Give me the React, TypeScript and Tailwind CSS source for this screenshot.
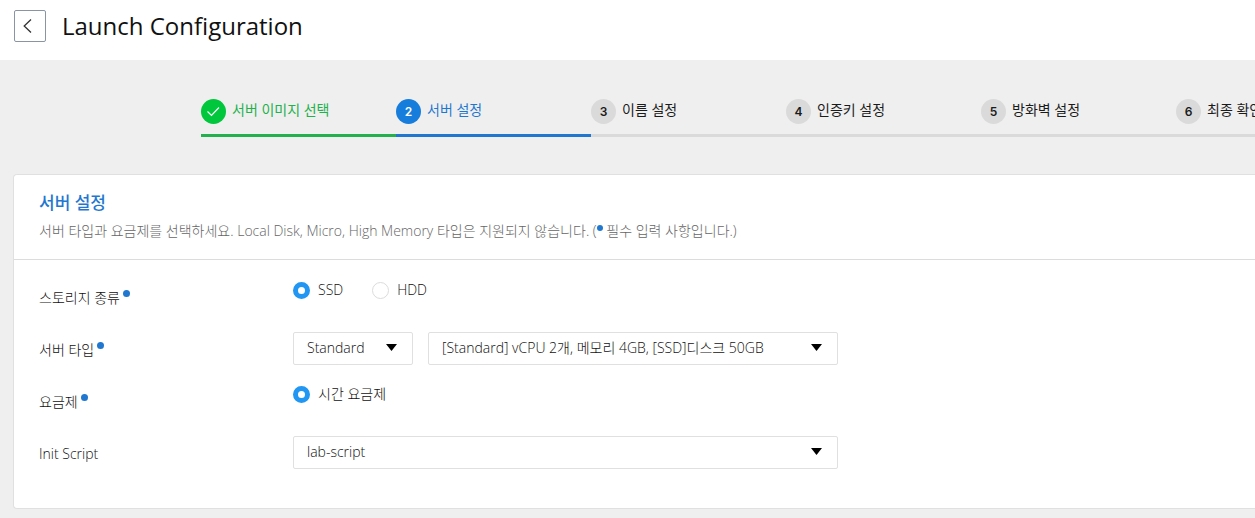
import { useState, type ReactNode, type SelectHTMLAttributes, type InputHTMLAttributes } from "react";

type StepState = "done" | "current" | "upcoming";

const steps: { label: string; state: StepState }[] = [
  { label: "서버 이미지 선택", state: "done" },
  { label: "서버 설정", state: "current" },
  { label: "이름 설정", state: "upcoming" },
  { label: "인증키 설정", state: "upcoming" },
  { label: "방화벽 설정", state: "upcoming" },
  { label: "최종 확인", state: "upcoming" },
];

const stepStyles: Record<StepState, { item: string; badge: string }> = {
  done: { item: "border-[#22b14c] text-[#22b14c]", badge: "bg-[#00c73c] text-white" },
  current: { item: "border-[#1f77d0] text-[#1f77d0]", badge: "bg-[#177ddc] text-white" },
  upcoming: { item: "border-[#dadada] text-[#1b1b1b]", badge: "bg-[#dadada] text-[#1b1b1b]" },
};

function Stepper() {
  return (
    <ol className="flex overflow-hidden pl-[201px]">
      {steps.map((step, index) => (
        <li
          key={step.label}
          aria-current={step.state === "current" ? "step" : undefined}
          className={`flex h-10 w-[195px] shrink-0 items-start gap-1.5 border-b-3 text-sm leading-[26px] whitespace-nowrap ${stepStyles[step.state].item}`}
        >
          <span
            className={`mt-0.5 flex size-[25px] items-center justify-center rounded-full font-[Inter] text-xs font-semibold ${stepStyles[step.state].badge}`}
          >
            {step.state === "done" ? (
              <svg viewBox="0 0 25 25" className="size-[25px]" fill="none" stroke="currentColor" strokeWidth="1.2">
                <path d="M6.5 12.5 10.5 16.5 18 8.5" />
              </svg>
            ) : (
              index + 1
            )}
          </span>
          {step.label}
        </li>
      ))}
    </ol>
  );
}

function RequiredDot() {
  return <span className="inline-block size-[7px] rounded-full bg-[#1f77d0]" />;
}

function Radio({ label, ...props }: { label: string } & InputHTMLAttributes<HTMLInputElement>) {
  return (
    <label className="flex items-center gap-2">
      <input
        type="radio"
        className="size-[17px] appearance-none rounded-full border border-[#dcdcdc] bg-white checked:border-5 checked:border-[#2196f3]"
        {...props}
      />
      {label}
    </label>
  );
}

function Select({ width, children, ...props }: { width: string; children: ReactNode } & SelectHTMLAttributes<HTMLSelectElement>) {
  return (
    <div className={`relative ${width}`}>
      <select
        className="h-[33px] w-full appearance-none rounded-xs border border-[#e0e0e0] bg-white pr-8 pb-0.5 pl-[13px] text-sm"
        {...props}
      >
        {children}
      </select>
      <svg viewBox="0 0 11 7" className="pointer-events-none absolute top-3 right-4 h-[7px] w-[11px]">
        <path d="M0 0H11L5.5 7Z" />
      </svg>
    </div>
  );
}

function Row({ label, htmlFor, required, children }: { label: string; htmlFor?: string; required?: boolean; children: ReactNode }) {
  const Label = htmlFor ? "label" : "span";
  return (
    <div className="flex h-[52px] items-start">
      <Label htmlFor={htmlFor} className="flex w-[254px] shrink-0 items-start gap-[3px] pt-2">
        {label}
        {required && (
          <span className="flex pt-0.5">
            <RequiredDot />
          </span>
        )}
      </Label>
      {children}
    </div>
  );
}

export default function App() {
  const [storage, setStorage] = useState("SSD");

  return (
    <div className="min-h-screen bg-[#efefef] font-['Open_Sans','Noto_Sans_CJK_KR',sans-serif] text-[#111]">
      <header className="flex h-15 items-start gap-4 bg-white pt-2.5 pl-3.5">
        <button type="button" aria-label="Back" className="flex size-8 items-center rounded-xs border border-[#8a94a3] pl-2">
          <svg viewBox="0 0 9 14" className="h-3.5 w-[9px]" fill="none" stroke="#333" strokeWidth="1.3">
            <path d="M8 0.5 1.2 7 8 13.5" />
          </svg>
        </button>
        <h1 className="text-2xl">Launch Configuration</h1>
      </header>

      <main className="pt-[37px] pb-[9px]">
        <Stepper />

        <section className="mt-[37px] ml-[13px] rounded-l border border-r-0 border-[#e0e0e0] bg-white text-sm font-light">
          <div className="h-[85px] border-b border-[#dcdcdc] pt-4 pl-[25px]">
            <h2 className="text-[17px] leading-6 font-medium text-[#1f77d0]">서버 설정</h2>
            <p className="mt-1 leading-6 whitespace-nowrap text-[#666]">
              서버 타입과 요금제를 선택하세요. Local Disk, Micro, High Memory 타입은 지원되지 않습니다. (
              <span className="inline-block align-middle leading-none">
                <span className="mb-2 block size-[6px] rounded-full bg-[#1f77d0]" />
              </span>{" "}
              필수 입력 사항입니다.)
            </p>
          </div>

          <div className="pt-5 pb-5 pl-[25px] leading-5">
            <Row label="스토리지 종류" required>
              <div role="radiogroup" aria-label="스토리지 종류" className="flex gap-[29px]">
                <Radio name="storage" label="SSD" checked={storage === "SSD"} onChange={() => setStorage("SSD")} />
                <Radio name="storage" label="HDD" checked={storage === "HDD"} onChange={() => setStorage("HDD")} />
              </div>
            </Row>
            <Row label="서버 타입" htmlFor="server-type" required>
              <div className="flex gap-[15px]">
                <Select id="server-type" width="w-[120px]">
                  <option>Standard</option>
                </Select>
                <Select aria-label="서버 사양" width="w-[410px]">
                  <option>[Standard] vCPU 2개, 메모리 4GB, [SSD]디스크 50GB</option>
                </Select>
              </div>
            </Row>
            <Row label="요금제" required>
              <Radio name="plan" label="시간 요금제" defaultChecked />
            </Row>
            <Row label="Init Script" htmlFor="init-script">
              <Select id="init-script" width="w-[545px]">
                <option>lab-script</option>
              </Select>
            </Row>
          </div>
        </section>
      </main>
    </div>
  );
}
